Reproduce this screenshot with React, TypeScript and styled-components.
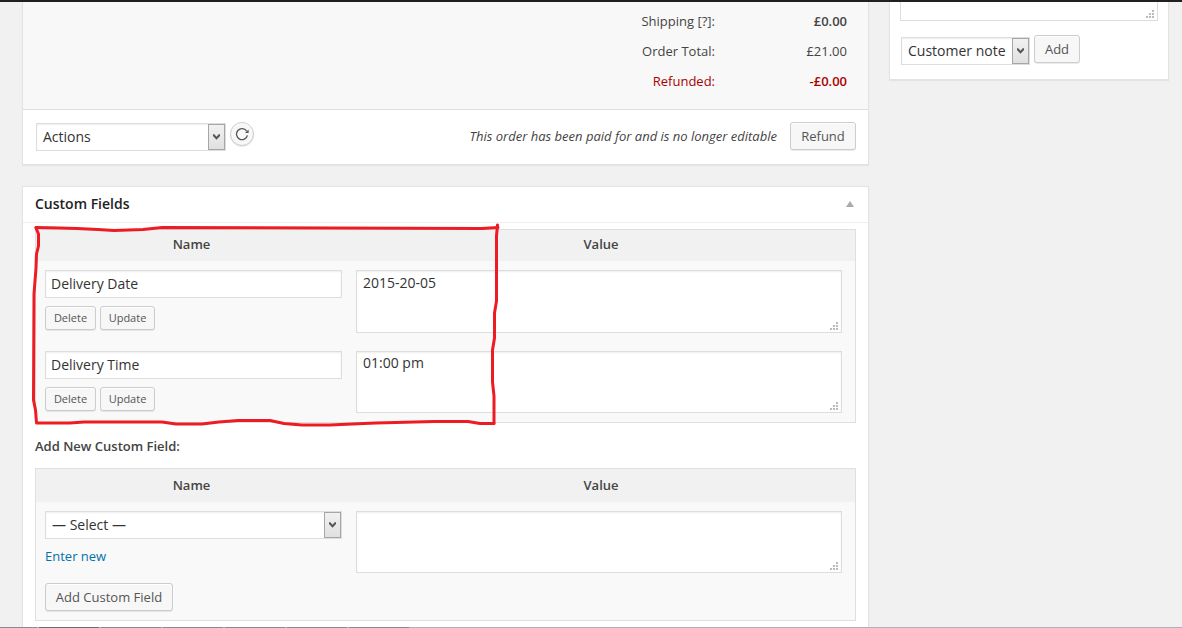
import React from "react";
import styled, { createGlobalStyle, css } from "styled-components";

const Global = createGlobalStyle`
  *, *::before, *::after { box-sizing: border-box; }
  body {
    margin: 0;
    background: #f1f1f1;
    color: #444;
    font: 13px/20px "Open Sans", sans-serif;
  }
`;

const Screen = styled.div`
  position: relative;
  display: flex;
  align-items: flex-start;
  gap: 20px;
  width: 1182px;
  height: 628px;
  padding-left: 22px;
  border-top: 2px solid #231f20;
  overflow: hidden;
`;

const MainColumn = styled.main`
  display: flex;
  flex-direction: column;
  gap: 21px;
  width: 847px;
`;

const Card = styled.section`
  background: #fff;
  border: 1px solid #e3e3e3;
  box-shadow: 0 1px 1px rgba(0, 0, 0, 0.05);
`;

const OrderCard = styled(Card)`
  border-top: 0;
`;

const Totals = styled.dl`
  margin: 0;
  height: 108px;
  padding: 4px 21px 0 0;
  background: #f8f8f8;
  border-bottom: 1px solid #dfdfdf;
`;

const TotalRow = styled.div<{ $refund?: boolean }>`
  display: flex;
  justify-content: flex-end;
  height: 30px;
  line-height: 30px;
  color: ${(p) => (p.$refund ? "#a00" : "#444")};
`;

const TotalLabel = styled.dt``;

const TotalValue = styled.dd<{ $strong?: boolean }>`
  width: 132px;
  margin: 0;
  text-align: right;
  font-weight: ${(p) => (p.$strong ? 600 : 400)};
`;

const PaidNote = styled.em`
  margin: 4px 13px 0 auto;
`;

const field = css`
  border: 1px solid #ddd;
  background: #fff;
  box-shadow: inset 0 1px 2px rgba(0, 0, 0, 0.07);
  color: #333;
  font-size: 14px;
`;

const SelectBox = styled.div<{ $width: number }>`
  ${field}
  display: flex;
  align-items: center;
  justify-content: space-between;
  flex: none;
  width: ${(p) => p.$width}px;
  height: 28px;
  padding-left: 6px;
  white-space: nowrap;
`;

const SelectArrow = styled.span`
  display: flex;
  align-items: center;
  justify-content: center;
  width: 17px;
  height: 26px;
  border: 1px solid #a6a6a6;
  background: linear-gradient(#f1f1f1, #e0e0e0);
`;

const OrderFooter = styled.div`
  display: flex;
  align-items: flex-start;
  height: 54px;
  padding: 12px 12px 0 13px;

  ${SelectBox} {
    margin-top: 1px;
  }
`;

const TextInput = styled.div`
  ${field}
  height: 28px;
  padding: 0 5px;
  line-height: 26px;
`;

const TextBox = styled.div<{ $height: number }>`
  ${field}
  display: flex;
  justify-content: space-between;
  height: ${(p) => p.$height}px;
  padding: ${(p) => Math.max(0, p.$height - 61)}px 3px 2px 6px;
`;

const GripIcon = styled.svg`
  align-self: flex-end;
  flex: none;
`;

const Button = styled.button<{ $small?: boolean; $width: number }>`
  flex: none;
  width: ${(p) => p.$width}px;
  height: ${(p) => (p.$small ? 24 : 28)}px;
  padding: 0;
  border: 1px solid #ccc;
  border-radius: 3px;
  background: #f7f7f7;
  box-shadow: inset 0 1px 0 #fff, 0 1px 0 rgba(0, 0, 0, 0.08);
  color: #555;
  font: ${(p) => (p.$small ? "11px/22px" : "13px/26px")} "Open Sans", sans-serif;
  white-space: nowrap;
`;

const ReloadButton = styled.button`
  display: flex;
  align-items: center;
  justify-content: center;
  width: 24px;
  height: 24px;
  margin-left: 4px;
  padding: 0;
  border: 1px solid #ccc;
  border-radius: 50%;
  background: #f7f7f7;
  box-shadow: inset 0 1px 0 #fff, 0 1px 0 rgba(0, 0, 0, 0.08);
`;

const FieldsCard = styled(Card)`
  height: 460px;
`;

const CardHeader = styled.header`
  display: flex;
  align-items: center;
  justify-content: space-between;
  height: 36px;
  padding: 0 14px 2px 12px;
  border-bottom: 1px solid #eee;
`;

const CardTitle = styled.h3`
  margin: 0;
  color: #222;
  font-size: 14px;
  font-weight: 600;
  line-height: 20px;
`;

const CardBody = styled.div`
  padding: 6px 12px 0;
`;

const FieldTable = styled.div`
  border: 1px solid #dfdfdf;
  background: #f9f9f9;
`;

const TableHead = styled.div<{ $height: number }>`
  display: grid;
  grid-template-columns: 311px 1fr;
  height: ${(p) => p.$height}px;
  background: #f1f1f1;
  font-weight: 600;
  line-height: ${(p) => (p.$height > 31 ? p.$height : p.$height - 2)}px;
  text-align: center;
`;

const FieldRow = styled.div<{ $height: number }>`
  display: grid;
  grid-template-columns: 297px 486px;
  column-gap: 14px;
  align-items: start;
  height: ${(p) => p.$height}px;
  padding: 9px 0 0 9px;
`;

const RowActions = styled.div`
  display: flex;
  gap: 4px;
  margin-top: 8px;
`;

const SubHeading = styled.p`
  margin: 13px 0 12px;
  font-weight: 600;
  line-height: 20px;
`;

const EnterNew = styled.a`
  display: block;
  margin: 7px 0 17px;
  color: #0073aa;
`;

const NotesCard = styled(Card)`
  width: 280px;
  height: 78px;
  border-top: 0;
  padding: 0 10px;
`;

const NoteBox = styled(TextBox)`
  border-top: 0;
  box-shadow: none;
`;

const NoteActions = styled.div`
  display: flex;
  align-items: flex-start;
  gap: 4px;
  padding: 14px 0 0 1px;

  ${SelectBox} {
    margin-top: 2px;
  }
`;

const Annotation = styled.svg`
  position: absolute;
  left: 0;
  top: -2px;
  pointer-events: none;
`;

const BottomEdge = styled.div`
  position: absolute;
  left: 0;
  bottom: 0;
  display: flex;
  gap: 2px;
  width: 100%;
  height: 1px;
  background: #b0b0b0;
`;

const EdgeSegment = styled.span<{ $width: number; $dark?: boolean }>`
  width: ${(p) => p.$width}px;
  background: ${(p) => (p.$dark ? "#6c6c6c" : "#8a8a8a")};
`;

const Grip = () => (
  <GripIcon width="8" height="8" fill="#bbb" shapeRendering="crispEdges">
    <path d="M6 0h2v2H6zM3 3h2v2H3zM6 3h2v2H6zM0 6h2v2H0zM3 6h2v2H3zM6 6h2v2H6z" />
  </GripIcon>
);

const Select = ({ label, width }: { label: string; width: number }) => (
  <SelectBox $width={width}>
    {label}
    <SelectArrow>
      <svg width="7" height="6" viewBox="0 0 7 6" fill="#555">
        <path d="M0 .3H1.300L3.500 2.800 5.700 .3H7V2L3.500 5.700 0 2z" />
      </svg>
    </SelectArrow>
  </SelectBox>
);

const TextArea = ({ value, height }: { value?: string; height: number }) => (
  <TextBox $height={height}>
    <span>{value}</span>
    <Grip />
  </TextBox>
);

const totals = [
  { label: "Shipping [?]:", value: "£0.00", strong: true },
  { label: "Order Total:", value: "£21.00" },
  { label: "Refunded:", value: "-£0.00", strong: true, refund: true },
];

const customFields = [
  { name: "Delivery Date", value: "2015-20-05", rowHeight: 81, boxHeight: 63 },
  { name: "Delivery Time", value: "01:00 pm", rowHeight: 80, boxHeight: 62 },
];

const edgeSegments = [37, 60, 60, 60, 60, 60, 60];

export default function App() {
  return (
    <>
      <Global />
      <Screen>
        <MainColumn>
          <OrderCard>
            <Totals>
              {totals.map((t) => (
                <TotalRow key={t.label} $refund={t.refund}>
                  <TotalLabel>{t.label}</TotalLabel>
                  <TotalValue $strong={t.strong}>{t.value}</TotalValue>
                </TotalRow>
              ))}
            </Totals>
            <OrderFooter>
              <Select label="Actions" width={190} />
              <ReloadButton aria-label="Apply">
                <svg width="14" height="14" viewBox="0 0 14 14" fill="none" stroke="#555" strokeWidth="1.300">
                  <path d="M12.400 8.300A5.500 5.500 0 1 1 11.600 4.100" />
                  <path d="M13.600 2.400v3.500H10z" fill="#555" stroke="none" />
                </svg>
              </ReloadButton>
              <PaidNote>This order has been paid for and is no longer editable</PaidNote>
              <Button $width={66}>Refund</Button>
            </OrderFooter>
          </OrderCard>

          <FieldsCard>
            <CardHeader>
              <CardTitle>Custom Fields</CardTitle>
              <svg width="8" height="6" fill="#aaa">
                <path d="M4 0 8 6H0z" />
              </svg>
            </CardHeader>
            <CardBody>
              <FieldTable>
                <TableHead $height={31}>
                  <span>Name</span>
                  <span>Value</span>
                </TableHead>
                {customFields.map((f) => (
                  <FieldRow key={f.name} $height={f.rowHeight}>
                    <div>
                      <TextInput>{f.name}</TextInput>
                      <RowActions>
                        <Button $small $width={51}>Delete</Button>
                        <Button $small $width={55}>Update</Button>
                      </RowActions>
                    </div>
                    <TextArea value={f.value} height={f.boxHeight} />
                  </FieldRow>
                ))}
              </FieldTable>
              <SubHeading>Add New Custom Field:</SubHeading>
              <FieldTable>
                <TableHead $height={33}>
                  <span>Name</span>
                  <span>Value</span>
                </TableHead>
                <FieldRow $height={118}>
                  <div>
                    <Select label="— Select —" width={297} />
                    <EnterNew>Enter new</EnterNew>
                    <Button $width={128}>Add Custom Field</Button>
                  </div>
                  <TextArea height={62} />
                </FieldRow>
              </FieldTable>
            </CardBody>
          </FieldsCard>
        </MainColumn>

        <NotesCard>
          <NoteBox $height={19}>
            <span />
            <Grip />
          </NoteBox>
          <NoteActions>
            <Select label="Customer note" width={129} />
            <Button $width={46}>Add</Button>
          </NoteActions>
        </NotesCard>

        <Annotation width="520" height="440" fill="none" stroke="#ed1c24" strokeWidth="3" strokeLinecap="round" strokeLinejoin="round">
          <path d="M36 227.500 60 228 77 228.500 98 229.500 114 230.500 143 229.500 162 227.500 330 228 482 228.500 498 227.500" />
          <path d="M36 228 38.500 234 38.500 246 36.500 254 36 268 34 294 33.500 400 35.500 410 36.500 423 70 423 84 422 162 422 176 424 202 424 219 422 238 420.500 270 420.500 284 423.500 302 425 330 425 352 424 376 423 434 421.500 468 421.500 480 423.500 494 423.500" />
          <path d="M497.500 225 496.500 236 496.500 301 494.500 313 494.500 338 492.500 350 492.500 382 494 396 494 423" />
        </Annotation>
        <BottomEdge>
          {edgeSegments.map((w, i) => (
            <EdgeSegment key={i} $width={w} $dark={i === 1} />
          ))}
        </BottomEdge>
      </Screen>
    </>
  );
}
